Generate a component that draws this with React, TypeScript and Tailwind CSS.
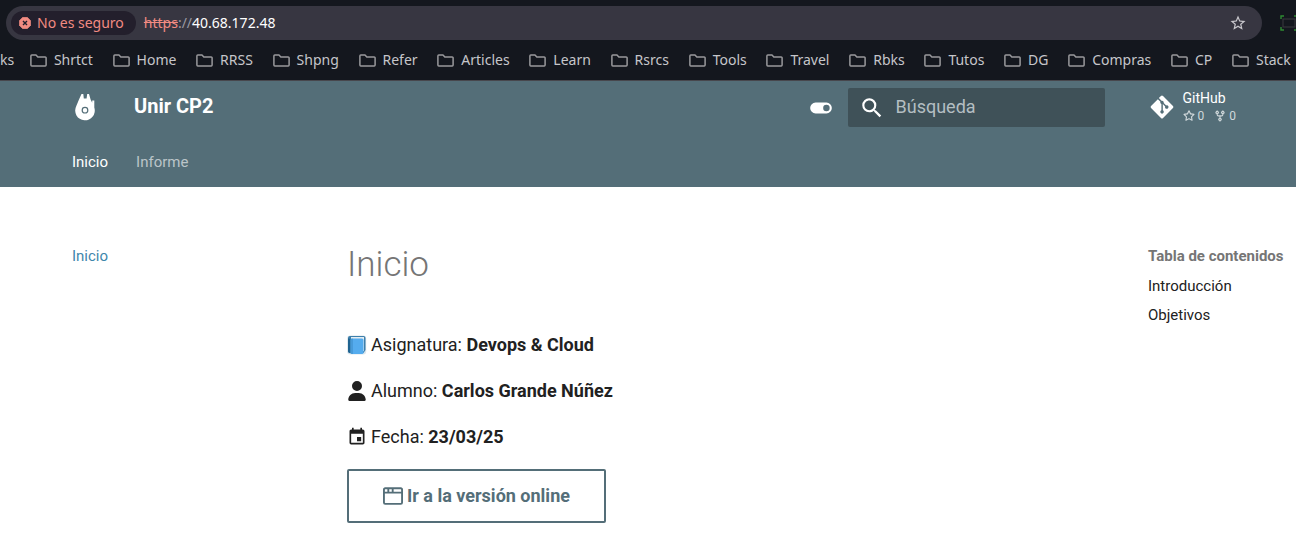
import React from "react";
import { FaGitAlt, FaUser } from "react-icons/fa6";
import { MdEvent, MdSearch, MdStarBorder } from "react-icons/md";

const bookmarks = ["Shrtct", "Home", "RRSS", "Shpng", "Refer", "Articles", "Learn", "Rsrcs", "Tools", "Travel", "Rbks", "Tutos", "DG", "Compras", "CP", "Stack"];

const STAR =
  "M8 .25a.75.75 0 0 1 .673.418l1.882 3.815 4.21.612a.75.75 0 0 1 .416 1.279l-3.046 2.97.719 4.192a.751.751 0 0 1-1.088.791L8 12.347l-3.766 1.98a.75.75 0 0 1-1.088-.79l.72-4.194L.818 6.374a.75.75 0 0 1 .416-1.28l4.21-.611L7.327.668A.75.75 0 0 1 8 .25Zm0 2.445L6.615 5.5a.75.75 0 0 1-.564.41l-3.097.45 2.24 2.184a.75.75 0 0 1 .216.664l-.528 3.084 2.769-1.456a.75.75 0 0 1 .698 0l2.77 1.456-.53-3.084a.75.75 0 0 1 .216-.664l2.24-2.183-3.096-.45a.75.75 0 0 1-.564-.41L8 2.694Z";
const FORK =
  "M5 5.372v.878c0 .414.336.75.75.75h4.5a.75.75 0 0 0 .75-.75v-.878a2.25 2.25 0 1 1 1.5 0v.878a2.25 2.25 0 0 1-2.25 2.25h-1.5v2.128a2.251 2.251 0 1 1-1.5 0V8.5h-1.5A2.25 2.25 0 0 1 3.5 6.25v-.878a2.25 2.25 0 1 1 1.5 0ZM5 3.25a.75.75 0 1 0-1.5 0 .75.75 0 0 0 1.5 0Zm6.75.75a.75.75 0 1 0 0-1.5.75.75 0 0 0 0 1.5Zm-3 8.75a.75.75 0 1 0-1.5 0 .75.75 0 0 0 1.5 0Z";
const WINDOW =
  "M0 2.75C0 1.784.784 1 1.75 1h12.5c.966 0 1.75.784 1.75 1.75v10.5A1.75 1.75 0 0 1 14.25 15H1.75A1.75 1.75 0 0 1 0 13.25ZM14.5 6h-13v7.25c0 .138.112.25.25.25h12.5a.25.25 0 0 0 .25-.25ZM8.500 2.500v2h6V2.750a.25.25 0 0 0-.25-.25ZM5 2.500v2h2v-2Zm-3.250 0a.25.25 0 0 0-.25.25V4.500h2v-2Z";

function Glyph({ d, className }: { d: string; className: string }) {
  return (
    <svg viewBox="0 0 16 16" fill="currentColor" fillRule="evenodd" className={className} aria-hidden="true">
      <path d={d} />
    </svg>
  );
}

function Folder() {
  return (
    <svg width="17" height="13" viewBox="0 0 17 13" fill="none" stroke="#99999c" strokeWidth="1.5" strokeLinejoin="round" aria-hidden="true">
      <path d="M1.800 1H6l1.800 2h7.400a.9.9 0 0 1 .9.9v7.200a.9.9 0 0 1-.9.9H1.800a.9.9 0 0 1-.9-.9V1.900a.9.9 0 0 1 .9-.9Z" />
    </svg>
  );
}

function Browser() {
  return (
    <div className="bg-[#14171e] font-['Noto_Sans',sans-serif]">
      <div className="flex items-center pt-1.5 pl-1.5">
        <div className="flex h-[34px] min-w-0 flex-1 items-center rounded-full bg-[#373641] pr-[15px] pl-[5px]">
          <button className="flex h-6 items-center gap-1.5 rounded-full bg-[#231f2c] pr-3 pl-2 text-sm text-[#f28b82]">
            <svg width="12" height="12" viewBox="0 0 12 12" aria-hidden="true">
              <path d="M3.7.3h4.6l3.4 3.4v4.6l-3.4 3.4H3.7L.3 8.3V3.7Z" fill="#f28b82" stroke="#f28b82" strokeWidth=".6" strokeLinejoin="round" />
              <path d="m4 4 4 4M8 4 4 8" stroke="#231f2c" strokeWidth="1.4" />
            </svg>
            No es seguro
          </button>
          <div className="ml-2 flex-1 text-sm text-[#9a99a2]">
            <span className="text-[#f28b82] line-through">https</span>://<span className="text-white">40.68.172.48</span>
          </div>
          <button aria-label="Marcador">
            <MdStarBorder className="size-[18px] text-[#c9c8cd]" />
          </button>
        </div>
        <div className="flex w-[34px] shrink-0 justify-end overflow-hidden">
          <svg className="-mr-0.5 shrink-0" width="18" height="16" viewBox="0 0 18 16" fill="none" aria-hidden="true">
            <path d="M1 4V1h3M14 1h3v3M17 12v3h-3M4 15H1v-3" stroke="#2e8b32" strokeWidth="1.4" />
            <rect x="3" y="4" width="12" height="8" stroke="#3a3b3e" />
          </svg>
        </div>
      </div>
      <nav className="flex h-[41px] items-center justify-between overflow-hidden border-b border-[#47474d] pr-[5px] text-sm whitespace-nowrap text-[#c6c6ca]">
        <a href="#" className="-mr-1">ks</a>
        {bookmarks.map((b) => (
          <a key={b} href="#" className="flex items-center gap-[7px]">
            <Folder />
            {b}
          </a>
        ))}
      </nav>
    </div>
  );
}

function Header() {
  return (
    <header className="bg-[#546e78] pr-[60px] pl-[72px] text-white">
      <div className="flex h-[53px] items-center">
        <a href="#" aria-label="Unir CP2" className="w-[62px] pb-0.5">
          <svg width="26" height="28" viewBox="0 0 26 28" aria-hidden="true">
            <path fillRule="evenodd" fill="#fff" d="M9.500 1 7 6.500 4.200 13.200A9.800 9.800 0 1 0 22.300 14.500V7.500H20.200V9.800L18.600 6.500 17 1H15.200L14.600 5.500H11.800L11.300 1ZM13 13.800a3.400 3.400 0 1 0 0 6.800 3.400 3.400 0 0 0 0-6.800Zm0 1.200a2.200 2.200 0 1 1 0 4.400 2.200 2.200 0 0 1 0-4.400Z" />
          </svg>
        </a>
        <h2 className="flex-1 pb-1 text-xl font-bold">Unir CP2</h2>
        <button aria-label="Cambiar tema" className="mr-3.5">
          <svg width="26" height="26" viewBox="0 0 24 24" fill="currentColor" aria-hidden="true">
            <path d="M17 7H7a5 5 0 0 0-5 5 5 5 0 0 0 5 5h10a5 5 0 0 0 5-5 5 5 0 0 0-5-5m0 8a3 3 0 0 1-3-3 3 3 0 0 1 3-3 3 3 0 0 1 3 3 3 3 0 0 1-3 3" />
          </svg>
        </button>
        <label className="mr-11 flex h-[39px] w-[257px] items-center rounded-xs bg-[#3f5158] pl-[11px]">
          <MdSearch className="size-[26px] shrink-0" />
          <input type="search" aria-label="Búsqueda" placeholder="Búsqueda" className="ml-[11px] w-full bg-transparent pb-0.5 text-lg outline-none placeholder:text-[#b4bec2]" />
        </label>
        <a href="#" className="flex items-center gap-2 pb-0.5">
          <FaGitAlt className="size-[26px]" />
          <span className="flex flex-col text-sm leading-[18px]">
            GitHub
            <span className="flex items-center text-xs leading-[18px] text-[#d0d8db]">
              <Glyph d={STAR} className="mr-[3px] size-3" />0
              <Glyph d={FORK} className="mr-[3px] ml-2.5 size-3" />0
            </span>
          </span>
        </a>
      </div>
      <nav className="flex h-[53px] items-center gap-7 pt-1 text-[15px]">
        <a href="#">Inicio</a>
        <a href="#" className="text-[#bbc5c9]">Informe</a>
      </nav>
    </header>
  );
}

function Book() {
  return (
    <svg width="20" height="20" viewBox="0 0 20 20" aria-hidden="true">
      <rect x=".2" y=".5" width="19" height="19" rx="3" fill="#dce6ec" />
      <path d="M3 1h13.500a2 2 0 0 1 2 2v12l-2 3H3a2 2 0 0 1-2-2V3a2 2 0 0 1 2-2Z" fill="#3d7fab" />
      <path d="M4 2h13v14H4Z" fill="#e4edf2" />
      <path d="M1 3.500 3.500 4v14.500L2.500 18A2 2 0 0 1 1 16Z" fill="#1f6390" />
      <rect x="3.500" y="3.500" width="13" height="15.500" rx="1.500" fill="#55acee" />
      <path d="M5 3.500V19" stroke="#3b88c3" />
    </svg>
  );
}

export default function App() {
  return (
    <div className="min-h-screen bg-white font-[Roboto,sans-serif] text-[#212121]">
      <Browser />
      <Header />
      <div className="flex pt-[57px] pl-[72px]">
        <nav className="w-[275px] text-[15px] leading-6">
          <a href="#" className="text-[#3e87ac]">Inicio</a>
        </nav>
        <main className="flex-1 text-lg leading-7">
          <h1 className="mb-[45px] text-[35px] leading-[42px] font-light text-[#757575]">Inicio</h1>
          <div className="flex flex-col gap-[18px]">
            <p className="flex items-center gap-1"><Book /><span>Asignatura: <strong>Devops &amp; Cloud</strong></span></p>
            <p className="flex items-center gap-1"><FaUser className="size-5" /><span>Alumno: <strong>Carlos Grande Núñez</strong></span></p>
            <p className="flex items-center gap-1"><MdEvent className="size-5" /><span>Fecha: <strong>23/03/25</strong></span></p>
            <a href="#" className="flex h-[54px] items-center gap-1 self-start rounded-xs border-2 border-[#546e78] px-[34px] font-bold text-[#546e78]">
              <Glyph d={WINDOW} className="size-5" />Ir a la versión online
            </a>
          </div>
        </main>
        <nav className="w-[148px] text-[15px] leading-6">
          <h2 className="font-bold text-[#757575]">Tabla de contenidos</h2>
          <a href="#" className="mt-1.5 block">Introducción</a>
          <a href="#" className="mt-[5px] block">Objetivos</a>
        </nav>
      </div>
    </div>
  );
}
